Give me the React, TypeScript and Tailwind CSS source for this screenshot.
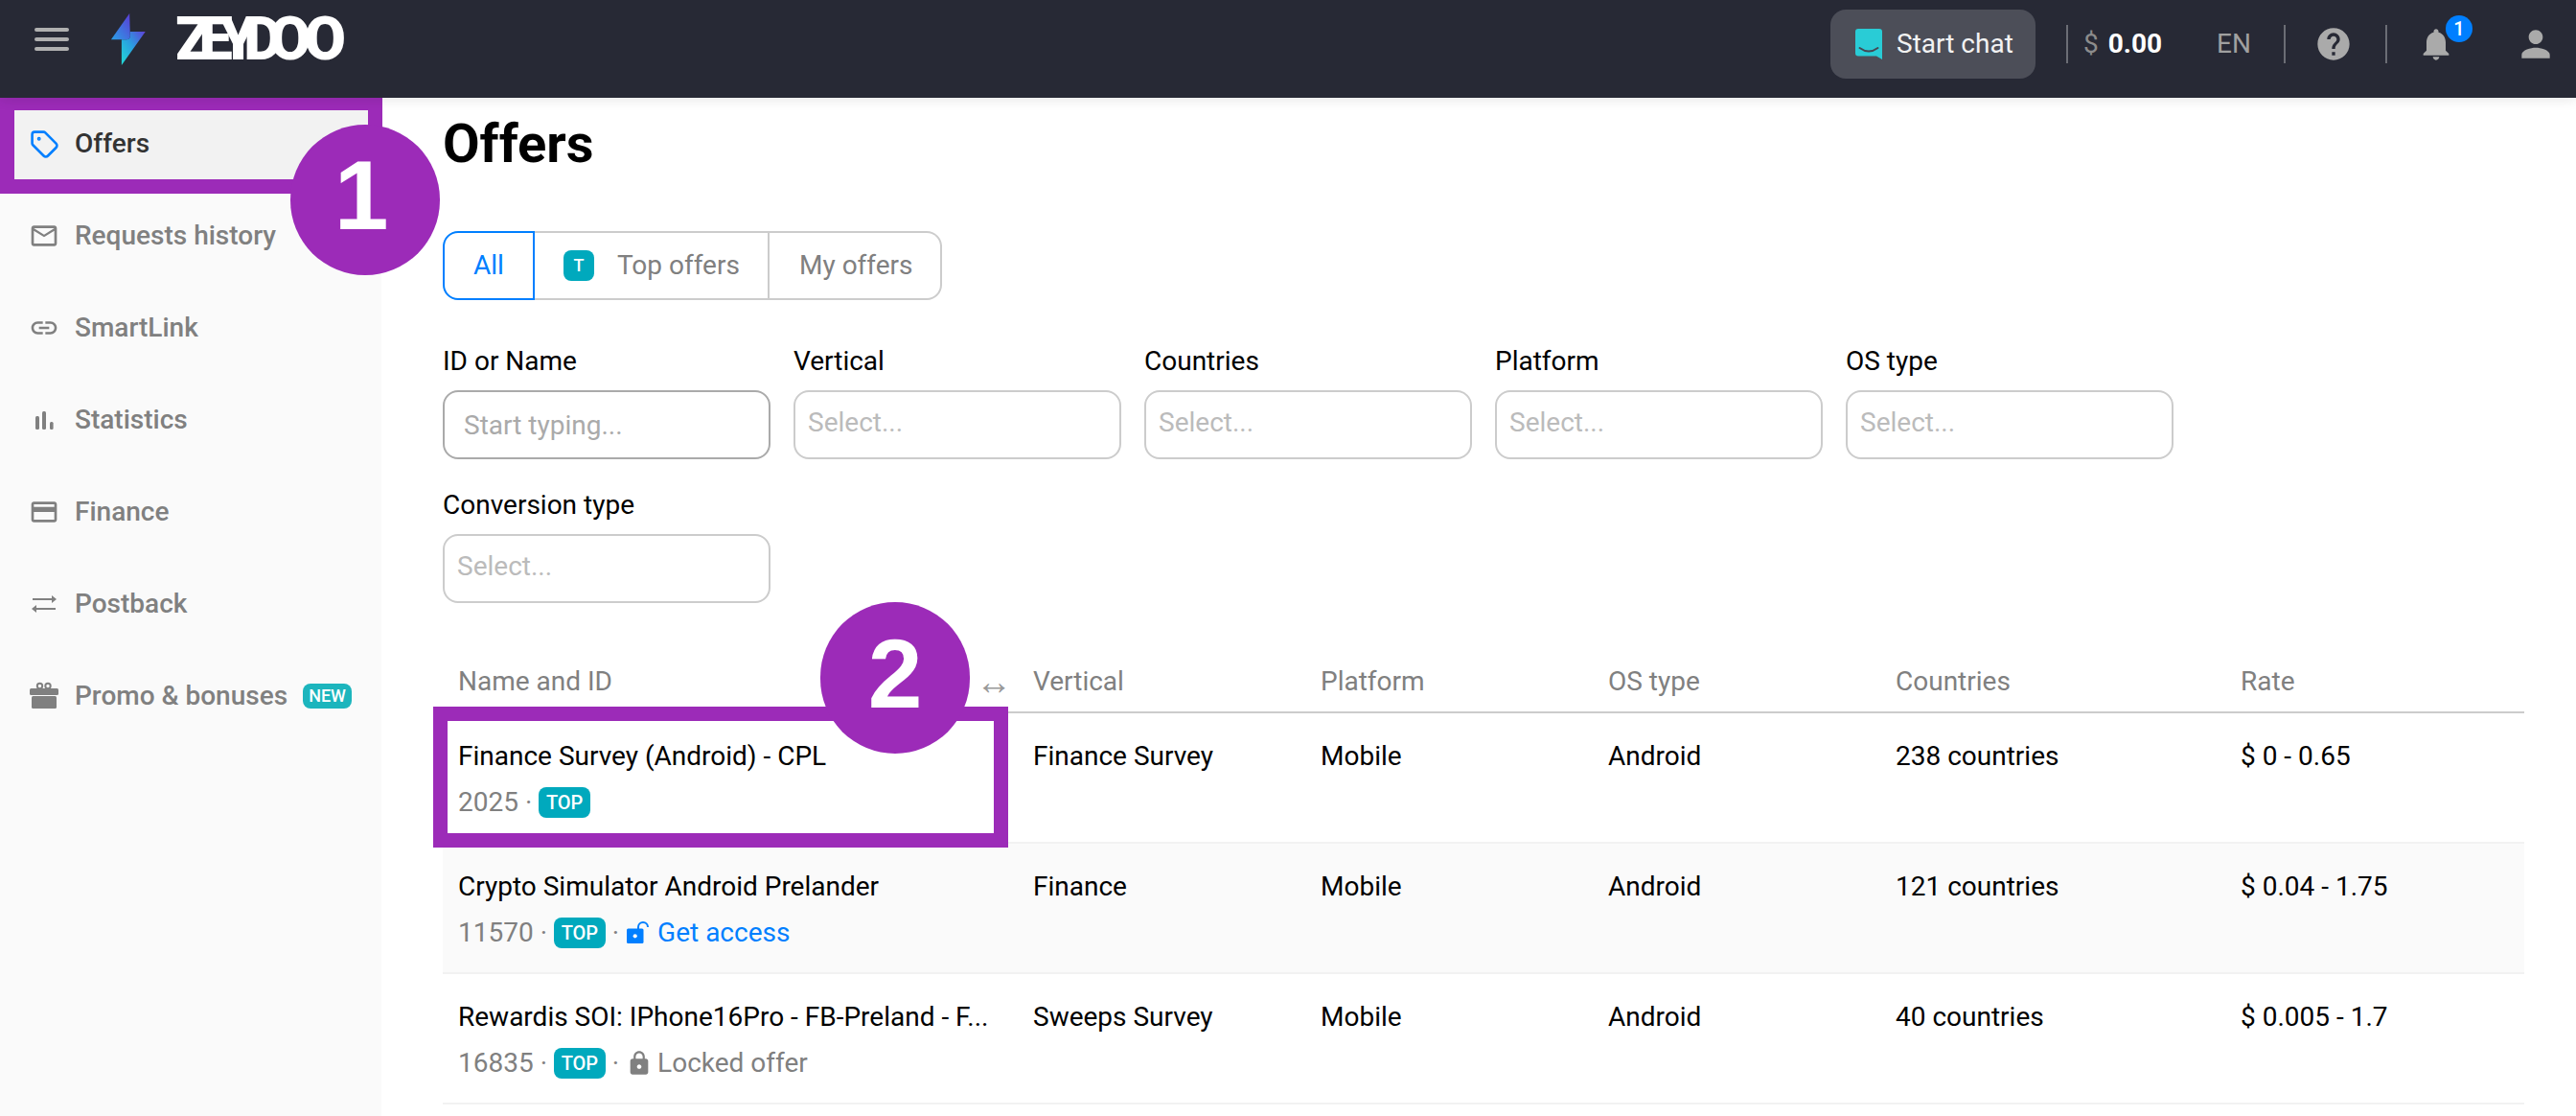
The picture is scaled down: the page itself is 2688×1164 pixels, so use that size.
import { Tag } from 'lucide-react';
import type { ReactNode } from 'react';

const MailIcon = () => (
  <svg viewBox="0 0 24 24" className="w-8 h-8 fill-current">
    <path d="M20 4H4c-1.1 0-1.99.9-1.99 2L2 18c0 1.1.9 2 2 2h16c1.1 0 2-.9 2-2V6c0-1.1-.9-2-2-2zm0 14H4V8l8 5 8-5v10zm-8-7L4 6h16l-8 5z" />
  </svg>
);

const LinkIcon = () => (
  <svg viewBox="0 0 24 24" className="w-8 h-8 fill-current">
    <path d="M3.9 12c0-1.71 1.39-3.1 3.1-3.1h4V7H7c-2.76 0-5 2.24-5 5s2.24 5 5 5h4v-1.9H7c-1.71 0-3.1-1.39-3.1-3.1zM8 13h8v-2H8v2zm9-6h-4v1.9h4c1.71 0 3.1 1.39 3.1 3.1s-1.39 3.1-3.1 3.1h-4V17h4c2.76 0 5-2.24 5-5s-2.24-5-5-5z" />
  </svg>
);

const StatsIcon = () => (
  <svg viewBox="0 0 32 32" className="w-8 h-8 fill-current">
    <rect x="7" y="12" width="4" height="14" rx="1.5" />
    <rect x="14" y="7" width="4" height="19" rx="1.5" />
    <rect x="22" y="18" width="3.6" height="8" rx="1.5" />
  </svg>
);

const CardIcon = () => (
  <svg viewBox="0 0 24 24" className="w-8 h-8 fill-current">
    <path d="M20 4H4c-1.11 0-1.99.89-1.99 2L2 18c0 1.11.89 2 2 2h16c1.11 0 2-.89 2-2V6c0-1.11-.89-2-2-2zm0 14H4v-6h16v6zm0-10H4V6h16v2z" />
  </svg>
);

const SwapIcon = () => (
  <svg viewBox="0 0 32 32" className="w-8 h-8 fill-current">
    <rect x="4" y="10" width="21" height="2" />
    <path d="M24 7l5 4-5 4z" />
    <rect x="7" y="20" width="21" height="2" />
    <path d="M8 17l-5 4 5 4z" />
  </svg>
);

const GiftIcon = () => (
  <svg viewBox="0 0 32 32" className="w-8 h-8 fill-current">
    <circle cx="11.5" cy="5.5" r="2.7" fill="none" stroke="currentColor" strokeWidth="2" />
    <circle cx="20" cy="5.5" r="2.7" fill="none" stroke="currentColor" strokeWidth="2" />
    <rect x="1" y="8" width="30" height="7" rx="1.5" />
    <rect x="3" y="16" width="26" height="13" rx="1.5" />
  </svg>
);

const BoltLogo = () => (
  <svg viewBox="0 0 110 163" className="w-[37px] h-[54px]">
    <defs>
      <linearGradient id="boltTop" x1="0" y1="1" x2="1" y2="0">
        <stop offset="0" stopColor="#2aa0e6" />
        <stop offset="1" stopColor="#5b3bd6" />
      </linearGradient>
      <linearGradient id="boltBottom" x1="0" y1="1" x2="1" y2="0">
        <stop offset="0" stopColor="#22dcd6" />
        <stop offset="0.5" stopColor="#2a9fe0" />
        <stop offset="1" stopColor="#5f40d8" />
      </linearGradient>
    </defs>
    <path d="M110 57H62v13Q62 82 50 82H35v81z" fill="url(#boltBottom)" />
    <path d="M60 0L2 82h48Q62 82 62 70z" fill="url(#boltTop)" />
  </svg>
);

const ChatIcon = () => (
  <svg viewBox="0 0 28 32" className="w-7 h-8">
    <path d="M3 0H25a3 3 0 0 1 3 3V32L22 28.5H3a3 3 0 0 1-3-3V3a3 3 0 0 1 3-3z" fill="#29ccd6" />
    <path d="M4.5 20Q14 27 23.5 20" fill="none" stroke="#454753" strokeWidth="2" strokeLinecap="round" />
  </svg>
);

const OpenLock = () => (
  <svg viewBox="0 0 28 28" className="w-7 h-7 shrink-0">
    <path d="M13 10V8a5 5 0 0 1 10 0" fill="none" stroke="#007fff" strokeWidth="2" />
    <rect x="1" y="9.5" width="17.5" height="15.5" rx="1.5" fill="#007fff" />
    <circle cx="9.7" cy="17.3" r="2.1" fill="#fafafa" />
  </svg>
);

const ClosedLock = () => (
  <svg viewBox="0 0 24 24" className="w-7 h-7 shrink-0 fill-[#808080]">
    <path d="M18 8h-1V6c0-2.76-2.24-5-5-5S7 3.24 7 6v2H6c-1.1 0-2 .9-2 2v10c0 1.1.9 2 2 2h12c1.1 0 2-.9 2-2V10c0-1.1-.9-2-2-2zm-6 9c-1.1 0-2-.9-2-2s.9-2 2-2 2 .9 2 2-.9 2-2 2zm3.1-9H8.9V6c0-1.71 1.39-3.1 3.1-3.1 1.71 0 3.1 1.39 3.1 3.1v2z" />
  </svg>
);

const navItems: { label: string; icon: ReactNode; badge?: string }[] = [
  { label: 'Requests history', icon: <MailIcon /> },
  { label: 'SmartLink', icon: <LinkIcon /> },
  { label: 'Statistics', icon: <StatsIcon /> },
  { label: 'Finance', icon: <CardIcon /> },
  { label: 'Postback', icon: <SwapIcon /> },
  { label: 'Promo & bonuses', icon: <GiftIcon />, badge: 'NEW' },
];

const offers = [
  { name: 'Finance Survey (Android) - CPL', id: '2025', vertical: 'Finance Survey', countries: '238 countries', rate: '$ 0 - 0.65', access: null },
  { name: 'Crypto Simulator Android Prelander', id: '11570', vertical: 'Finance', countries: '121 countries', rate: '$ 0.04 - 1.75', access: 'open' },
  { name: 'Rewardis SOI: IPhone16Pro - FB-Preland - F...', id: '16835', vertical: 'Sweeps Survey', countries: '40 countries', rate: '$ 0.005 - 1.7', access: 'locked' },
];

const filters = ['Vertical', 'Countries', 'Platform', 'OS type'];

const gridCols = 'grid grid-cols-[600px_300px_300px_300px_360px_1fr]';

function Header() {
  return (
    <header className="relative z-10 h-[102px] shrink-0 flex items-center bg-[#272935] shadow-[0_2px_12px_rgba(0,0,0,0.1)]">
      <div className="flex items-center pl-[36px] mb-[20px]">
        <div className="w-9 flex flex-col gap-[6px]">
          <div className="h-1 rounded-full bg-[#b0b0b0]" />
          <div className="h-1 rounded-full bg-[#b0b0b0]" />
          <div className="h-1 rounded-full bg-[#b0b0b0]" />
        </div>
        <div className="ml-[43px]">
          <BoltLogo />
        </div>
        <span className="ml-[31px] w-[176px] whitespace-nowrap text-[63px] leading-[54px] font-black text-white">
          <span className="tracking-[-14px]">ZEYD</span>
          <span className="tracking-[-7px]">OO</span>
        </span>
      </div>

      <div className="ml-auto flex items-center pr-[20px] mb-[10px] text-[28px] leading-10">
        <button className="w-[214px] h-[72px] pl-[26px] flex items-center gap-[15px] rounded-2xl bg-[#4c4e58] text-[#f2f2f2]">
          <ChatIcon />
          Start chat
        </button>
        <div className="ml-[32px] w-[2px] h-10 bg-[#6b6d75]" />
        <span className="ml-[16px] text-[#8c8c8c]">$</span>
        <span className="ml-[10px] font-bold text-white">0.00</span>
        <span className="ml-[57px] text-[#a0a0a0]">EN</span>
        <div className="ml-[34px] w-[2px] h-10 bg-[#6b6d75]" />
        <svg viewBox="0 0 24 24" className="ml-[30px] w-10 h-10 fill-[#aaaaaa]">
          <path d="M12 2C6.48 2 2 6.48 2 12s4.48 10 10 10 10-4.48 10-10S17.52 2 12 2zm1 17h-2v-2h2v2zm2.07-7.75l-.9.92C13.45 12.9 13 13.5 13 15h-2v-.5c0-1.1.45-2.1 1.17-2.83l1.24-1.26c.37-.36.59-.86.59-1.41 0-1.1-.9-2-2-2s-2 .9-2 2H8c0-2.21 1.79-4 4-4s4 1.79 4 4c0 .88-.36 1.68-.93 2.25z" />
        </svg>
        <div className="ml-[34px] w-[2px] h-10 bg-[#6b6d75]" />
        <div className="relative ml-[31px] w-10 h-10">
          <svg viewBox="0 0 24 24" className="w-10 h-10 fill-[#aaaaaa]">
            <path d="M12 22c1.1 0 2-.9 2-2h-4c0 1.1.89 2 2 2zm6-6v-5c0-3.07-1.64-5.64-4.5-6.32V4c0-.83-.67-1.5-1.5-1.5s-1.5.67-1.5 1.5v.68C7.63 5.36 6 7.92 6 11v5l-2 2v1h16v-1l-2-2z" />
          </svg>
          <span className="absolute left-[30px] top-[-10px] w-7 h-7 rounded-full bg-[#007fff] text-white text-[20px] leading-7 font-medium text-center">
            1
          </span>
        </div>
        <svg viewBox="0 0 24 24" className="ml-[62px] w-11 h-11 fill-[#aaaaaa]">
          <path d="M12 12c2.21 0 4-1.79 4-4s-1.79-4-4-4-4 1.79-4 4 1.79 4 4 4zm0 2c-2.67 0-8 1.34-8 4v2h16v-2c0-2.66-5.33-4-8-4z" />
        </svg>
      </div>
    </header>
  );
}

function Sidebar() {
  return (
    <aside className="w-[398px] shrink-0 bg-[#fafafa] pt-[13px] flex flex-col gap-6 text-[28px] font-medium">
      <div className="h-[72px] pb-[2px] flex items-center gap-4 pl-[30px] bg-[#f2f2f2] text-[#333333]">
        <div className="w-8 flex justify-center text-[#007fff]">
          <Tag size={31} strokeWidth={2} />
        </div>
        Offers
      </div>
      {navItems.map((item) => (
        <div key={item.label} className="h-[72px] pb-[2px] flex items-center gap-4 pl-[30px] text-[#808080]">
          {item.icon}
          {item.label}
          {item.badge && (
            <span className="w-[51px] h-[26px] rounded-lg bg-[#1cb5bd] text-white text-[18px] leading-[26px] text-center">
              {item.badge}
            </span>
          )}
        </div>
      ))}
    </aside>
  );
}

function Field({ label, placeholder, dark }: { label: string; placeholder: string; dark?: boolean }) {
  return (
    <div className="w-[342px]">
      <div className="h-10 leading-10 text-black mb-[10px]">{label}</div>
      {dark ? (
        <input
          readOnly
          placeholder={placeholder}
          className="w-full h-[72px] px-[20px] rounded-2xl border-2 border-[#aaaaaa] placeholder:text-[#aaaaaa] outline-none"
        />
      ) : (
        <div className="h-[72px] pl-[13px] pb-[4px] flex items-center rounded-2xl border-2 border-[#cccccc] text-[#bbbbbb]">
          {placeholder}
        </div>
      )}
    </div>
  );
}

function OfferRow({ offer, shaded }: { offer: (typeof offers)[number]; shaded: boolean }) {
  return (
    <div className={`${gridCols} h-[136px] pt-[25px] border-b-2 border-[#f2f2f2] text-black ${shaded ? 'bg-[#fafafa]' : ''}`}>
      <div className="pl-4">
        <div className="h-10 leading-10 mb-2">{offer.name}</div>
        <div className="h-10 flex items-center whitespace-pre text-[#808080]">
          {`${offer.id} · `}
          <span className="w-[54px] h-8 rounded-lg bg-[#00a9bd] text-white text-[20px] leading-8 font-medium text-center">
            TOP
          </span>
          {offer.access && ' · '}
          {offer.access === 'open' && (
            <span className="flex items-center gap-[5px] text-[#007fff]">
              <OpenLock />
              Get access
            </span>
          )}
          {offer.access === 'locked' && (
            <span className="flex items-center gap-[5px]">
              <ClosedLock />
              Locked offer
            </span>
          )}
        </div>
      </div>
      <div className="pl-4 leading-10">{offer.vertical}</div>
      <div className="pl-4 leading-10">Mobile</div>
      <div className="pl-4 leading-10">Android</div>
      <div className="pl-4 leading-10">{offer.countries}</div>
      <div className="pl-4 leading-10">{offer.rate}</div>
    </div>
  );
}

export default function App() {
  return (
    <div className="relative h-screen overflow-hidden flex flex-col bg-white font-[family-name:Roboto,sans-serif] text-[28px]">
      <Header />
      <div className="flex-1 flex min-h-0">
        <Sidebar />
        <main className="flex-1 pl-[64px] pr-[54px]">
          <h1 className="mt-[12px] h-[72px] text-[56px] leading-[72px] font-bold text-black">Offers</h1>

          <div className="mt-[55px] flex h-[72px] text-[#808080]">
            <div className="w-[96px] flex items-center justify-center border-2 border-[#007fff] rounded-l-2xl text-[#007fff]">
              All
            </div>
            <div className="w-[245px] pl-[30px] flex items-center gap-6 border-y-2 border-r-2 border-[#cccccc]">
              <span className="w-8 h-8 rounded-lg bg-[#00a9bd] text-white text-[18px] leading-8 font-medium text-center">T</span>
              Top offers
            </div>
            <div className="w-[180px] pl-[31px] flex items-center border-y-2 border-r-2 border-[#cccccc] rounded-r-2xl">
              My offers
            </div>
          </div>

          <div className="mt-[44px] w-[1830px] flex flex-wrap gap-x-6 gap-y-[28px]">
            <Field label="ID or Name" placeholder="Start typing..." dark />
            {filters.map((f) => (
              <Field key={f} label={f} placeholder="Select..." />
            ))}
            <Field label="Conversion type" placeholder="Select..." />
          </div>

          <div className={`${gridCols} mt-[51px] h-16 items-center border-b-2 border-[#cccccc] text-[#808080]`}>
            <div className="pl-4 pr-[6px] flex items-center justify-between">
              Name and ID
              <span className="text-[38px] leading-10 text-[#999999]">↔</span>
            </div>
            <div className="pl-4">Vertical</div>
            <div className="pl-4">Platform</div>
            <div className="pl-4">OS type</div>
            <div className="pl-4">Countries</div>
            <div className="pl-4">Rate</div>
          </div>
          {offers.map((offer, i) => (
            <OfferRow key={offer.id} offer={offer} shaded={i === 1} />
          ))}
        </main>
      </div>

      {/* Tutorial markers over the page */}
      <div className="absolute left-0 top-[100px] w-[399px] h-[102px] border-[15px] border-[#9c2bb8]" />
      <div className="absolute left-[303px] top-[130px] w-[156px] h-[157px] pb-2 pr-2 rounded-full bg-[#9c2bb8] flex items-center justify-center text-white text-[102px] font-bold font-[family-name:'Liberation_Sans',sans-serif]">
        1
      </div>
      <div className="absolute left-[452px] top-[737px] w-[600px] h-[147px] border-[15px] border-[#9c2bb8]" />
      <div className="absolute left-[856px] top-[628px] w-[156px] h-[158px] pb-2 rounded-full bg-[#9c2bb8] flex items-center justify-center text-white text-[102px] font-bold font-[family-name:'Liberation_Sans',sans-serif]">
        2
      </div>
    </div>
  );
}
